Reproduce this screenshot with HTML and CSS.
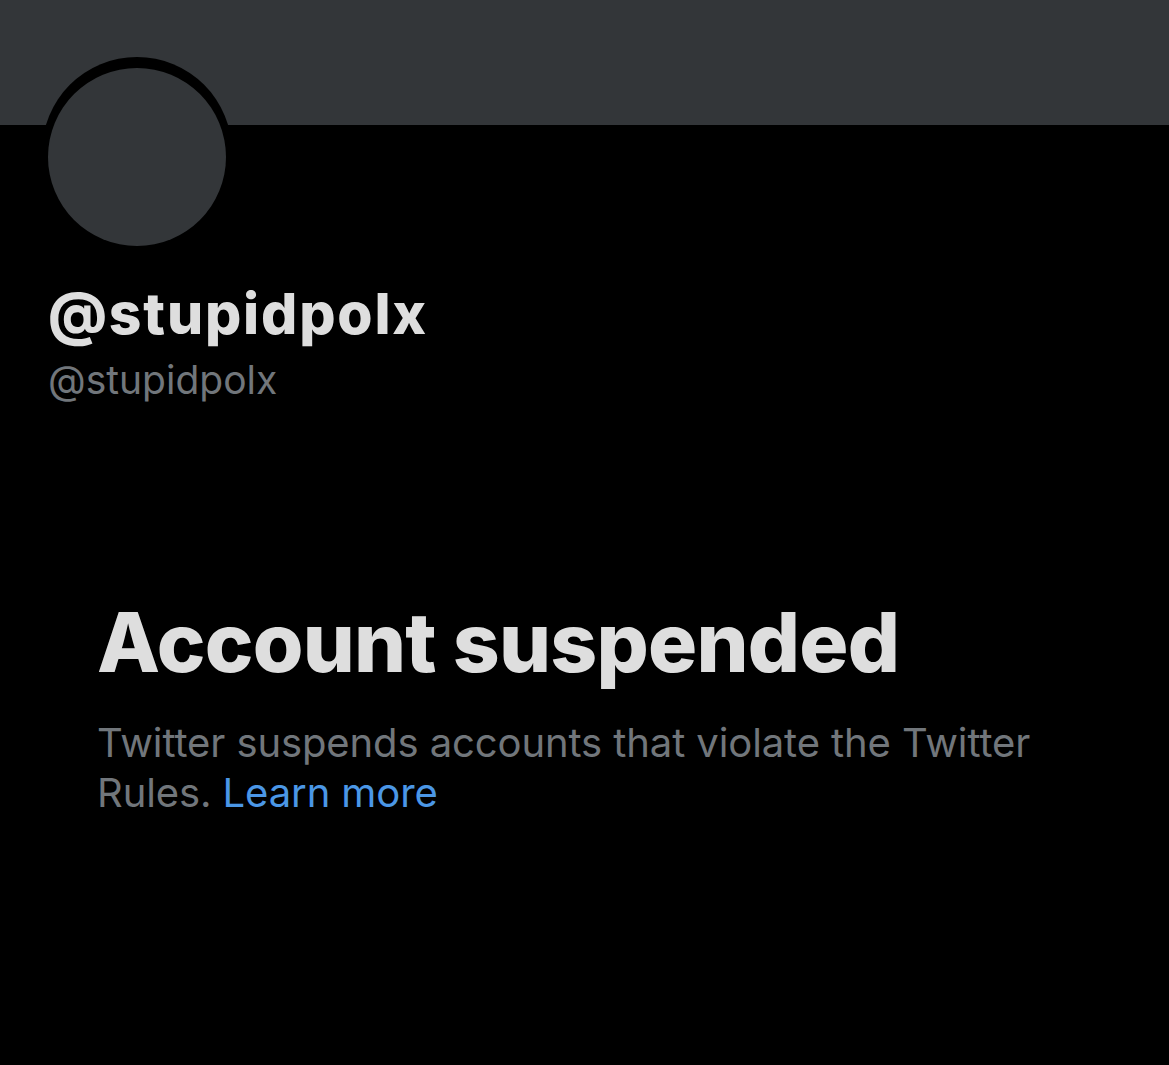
FILE: index.html
```html
<!DOCTYPE html>
<html>
<head>
<meta charset="utf-8">
<link rel="stylesheet" href="styles.css">
</head>
<body>
<div class="banner"></div>
<div class="profile">
  <div class="avatar"></div>
  <div class="name">@stupidpolx</div>
  <div class="handle">@stupidpolx</div>
</div>
<div class="notice">
  <h1 class="title">Account suspended</h1>
  <p class="desc">Twitter suspends accounts that violate the Twitter Rules. <a class="link" href="#">Learn more</a></p>
</div>
</body>
</html>
```
FILE: styles.css
```css
html, body {
  margin: 0;
  padding: 0;
  background: #000;
  height: 100%;
}
body {
  font-family: Inter, "Liberation Sans", sans-serif;
  overflow: hidden;
}
.banner {
  height: 125px;
  background: #333639;
}
.profile {
  padding-left: 48px;
}
.avatar {
  width: 178px;
  height: 178px;
  border-radius: 50%;
  background: #333639;
  box-shadow: 0 -5px 0 6px #000;
  margin-top: -57px;
}
.name {
  margin-top: 36px;
  font-size: 57px;
  font-weight: 800;
  line-height: 64px;
  color: #dedede;
  letter-spacing: 1.8px;
}
.handle {
  margin-top: 11px;
  font-size: 39px;
  line-height: 46px;
  color: #71767b;
}
.notice {
  padding: 0 97px;
  margin-top: 195px;
}
.title {
  margin: 0;
  font-size: 82px;
  font-weight: 800;
  line-height: 90px;
  color: #dedede;
  letter-spacing: -0.8px;
}
.desc {
  margin: 30px 0 0;
  font-size: 40px;
  line-height: 50px;
  color: #71767b;
  letter-spacing: -0.1px;
}
.link {
  color: #4b97e6;
  text-decoration: none;
}
```
